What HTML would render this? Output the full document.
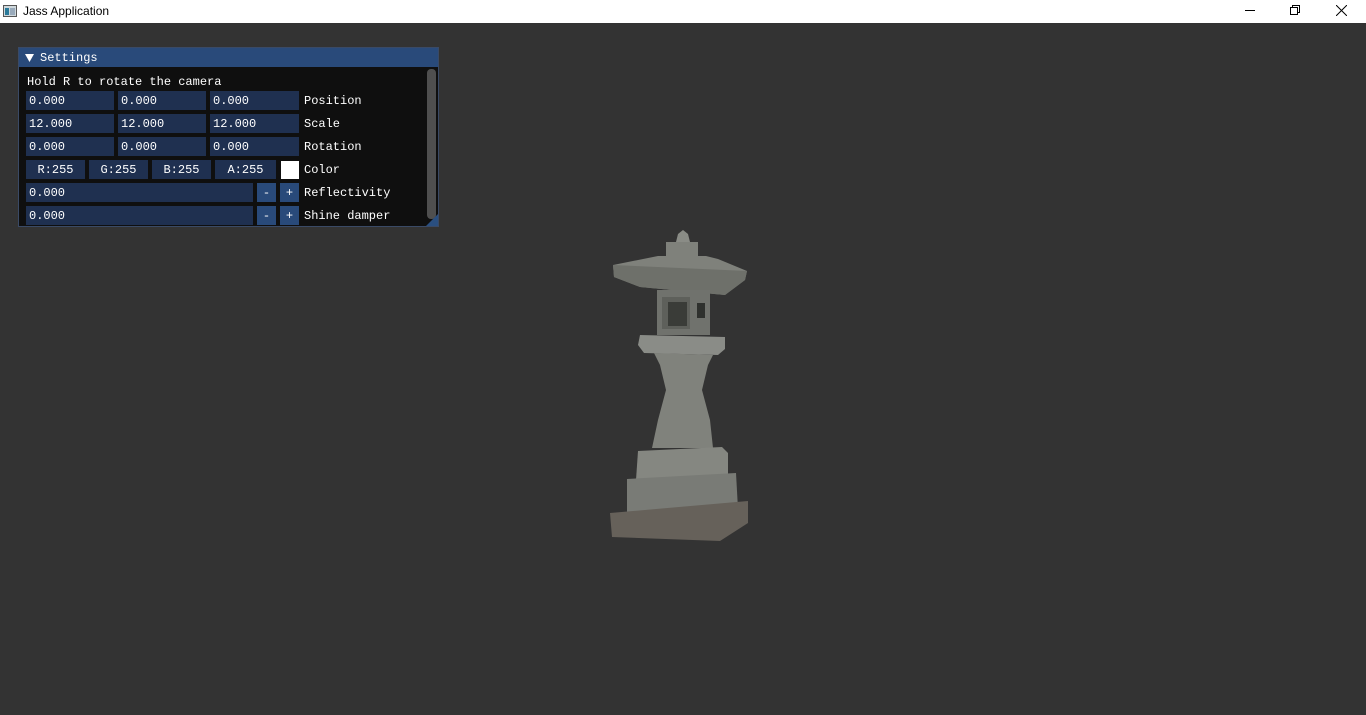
<!DOCTYPE html>
<html><head><style>
*{margin:0;padding:0;box-sizing:border-box}
body{width:1366px;height:715px;background:#333333;position:relative;overflow:hidden;font-family:"Liberation Mono",monospace}
#tb{position:absolute;left:0;top:0;width:1366px;height:23px;background:#fff;font-family:"Liberation Sans",sans-serif;font-size:12px;color:#000}
#tb .t{position:absolute;left:23px;top:4px}
.win{position:absolute;left:18px;top:47px;width:421px;height:180px;background:#0f0f0f;border:1px solid #3a4a66;overflow:hidden}
.hd{position:absolute;left:0;top:0;width:100%;height:19px;background:#294a7a;color:#fff;font-size:12px;line-height:21px;padding-left:21px}
.a{position:absolute}
.f{position:absolute;background:#1f3050;color:#fff;font-size:12px;line-height:21px;height:19px;padding-left:3px;overflow:hidden}
.c{text-align:center;padding-left:0}
.l{position:absolute;color:#fff;font-size:12px;line-height:21px}
</style></head><body>
<div id="tb"><svg class="a" style="left:3px;top:5px" width="14" height="12"><rect x="0.5" y="0.5" width="13" height="11" fill="#cfd8dc" stroke="#555"/><rect x="2" y="3" width="4" height="7" fill="#2a7a9a"/><rect x="7" y="3" width="5" height="7" fill="#9ab"/></svg><span class="t">Jass Application</span>
<div class="a" style="left:1245px;top:10px;width:10px;height:1px;background:#000"></div>
<svg class="a" style="left:1290px;top:5px" width="11" height="11"><rect x="0.5" y="2.5" width="7" height="7" fill="none" stroke="#000"/><path d="M2.5 2.5V0.5H9.5V7.5H7.5" fill="none" stroke="#000"/></svg>
<svg class="a" style="left:1336px;top:5px" width="11" height="11"><path d="M0 0L11 11M11 0L0 11" stroke="#000"/></svg>
</div>
<div class="win">
<div class="hd">Settings</div>
<svg class="a" style="left:6px;top:6px" width="9" height="8"><path d="M0 0H9L4.5 8Z" fill="#fff"/></svg>
<div class="l" style="left:8px;top:24px">Hold R to rotate the camera</div>
<div class="f" style="left:7px;top:43px;width:88px">0.000</div><div class="f" style="left:99px;top:43px;width:88px">0.000</div><div class="f" style="left:191px;top:43px;width:89px">0.000</div><div class="l" style="left:285px;top:43px">Position</div>
<div class="f" style="left:7px;top:66px;width:88px">12.000</div><div class="f" style="left:99px;top:66px;width:88px">12.000</div><div class="f" style="left:191px;top:66px;width:89px">12.000</div><div class="l" style="left:285px;top:66px">Scale</div>
<div class="f" style="left:7px;top:89px;width:88px">0.000</div><div class="f" style="left:99px;top:89px;width:88px">0.000</div><div class="f" style="left:191px;top:89px;width:89px">0.000</div><div class="l" style="left:285px;top:89px">Rotation</div>
<div class="f c" style="left:7px;top:112px;width:59px">R:255</div><div class="f c" style="left:70px;top:112px;width:59px">G:255</div><div class="f c" style="left:133px;top:112px;width:59px">B:255</div><div class="f c" style="left:196px;top:112px;width:61px">A:255</div>
<div class="a" style="left:262px;top:113px;width:18px;height:18px;background:#fff"></div><div class="l" style="left:285px;top:112px">Color</div>
<div class="f" style="left:7px;top:135px;width:227px">0.000</div><div class="f c" style="left:238px;top:135px;width:19px;background:#294a7a">-</div><div class="f c" style="left:261px;top:135px;width:19px;background:#294a7a">+</div><div class="l" style="left:285px;top:135px">Reflectivity</div>
<div class="f" style="left:7px;top:158px;width:227px">0.000</div><div class="f c" style="left:238px;top:158px;width:19px;background:#294a7a">-</div><div class="f c" style="left:261px;top:158px;width:19px;background:#294a7a">+</div><div class="l" style="left:285px;top:158px">Shine damper</div>
<div class="a" style="left:408px;top:21px;width:9px;height:150px;background:#4f4f4f;border-radius:4px"></div>
<svg class="a" style="left:405px;top:166px" width="14" height="12"><path d="M14 0V12H2Z" fill="#2a4f80"/></svg>
</div>
<svg class="a" style="left:600px;top:225px" width="160" height="320">
<path d="M83 5 L88 9 L90 17 L76 17 L78 9Z" fill="#8a8c86"/>
<rect x="66" y="17" width="32" height="14" fill="#7f817b"/>
<path d="M58 31 L106 31 L118 34 L147 46 L145 55 L125 70 L40 62 L14 52 L13 40Z" fill="#7f817b"/>
<path d="M13 40 L147 46 L145 55 L125 70 L40 62 L14 52Z" fill="#6e706a"/>
<rect x="57" y="65" width="53" height="45" fill="#70726d"/>
<rect x="62" y="72" width="28" height="32" fill="#5e605b"/>
<rect x="68" y="77" width="19" height="24" fill="#3a3c38"/>
<rect x="97" y="78" width="8" height="15" fill="#2f312e"/>
<path d="M40 110 L125 112 L125 124 L118 130 L44 128 L38 120Z" fill="#8a8c87"/>
<path d="M54 128 L113 130 L108 140 L102 165 L110 195 L113 223 L52 223 L58 195 L66 165 L60 140Z" fill="#80827c"/>
<path d="M38 226 L122 222 L128 228 L128 253 L36 255Z" fill="#858781"/>
<path d="M27 254 L136 248 L138 284 L27 290Z" fill="#797b76"/>
<path d="M10 288 L148 276 L148 298 L120 316 L12 312Z" fill="#66615a"/>
</svg>
</body></html>
